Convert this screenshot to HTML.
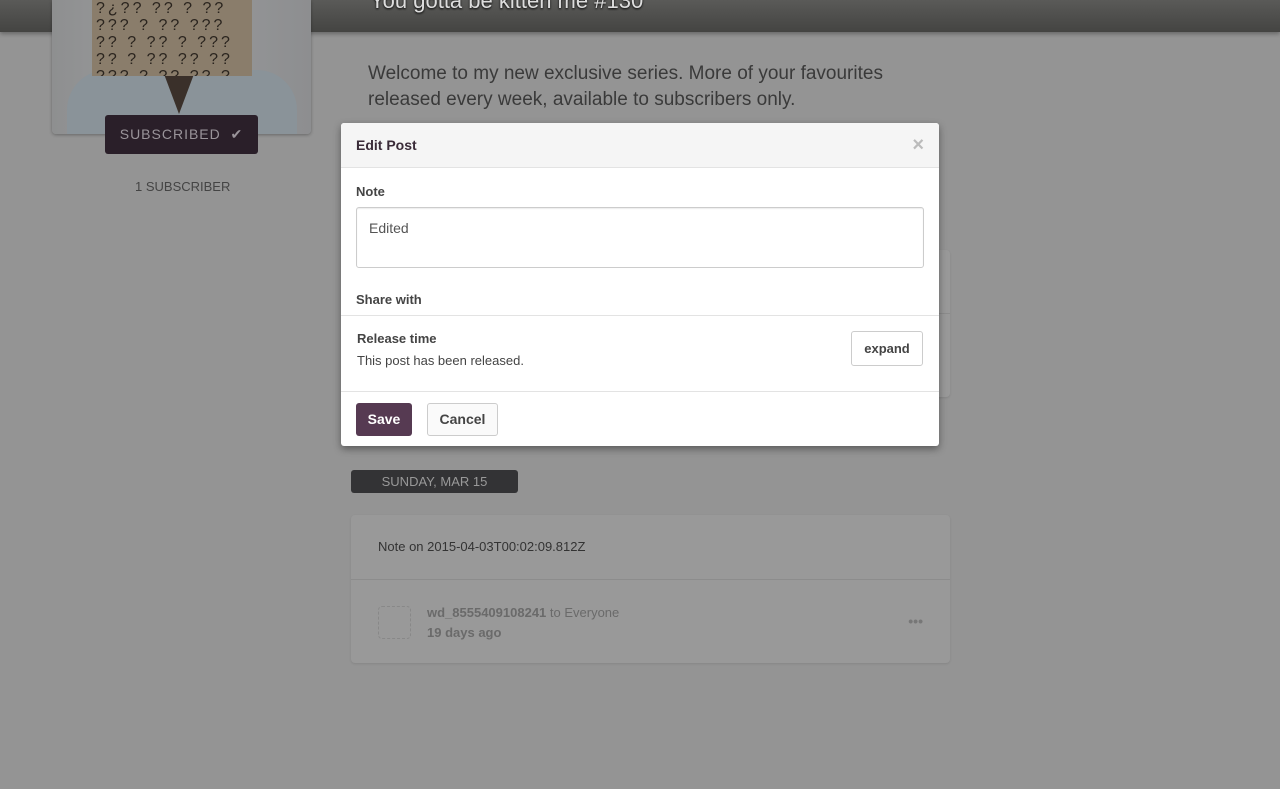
<!DOCTYPE html>
<html><head><style>
body{margin:0;width:1280px;height:789px;background:#949494;font-family:"Liberation Sans",sans-serif;position:relative;overflow:hidden}
.hdr{position:absolute;left:0;top:0;width:1280px;height:32px;background:linear-gradient(#5a5a58,#444442);box-shadow:0 2px 4px rgba(0,0,0,.3)}
.title{position:absolute;left:370px;top:-12px;font-size:22px;color:#ddd;text-shadow:0 1px 2px #000}
.pic{position:absolute;left:52px;top:0;width:259px;height:134px;border-radius:0 0 4px 4px;background:linear-gradient(90deg,#8e8f90,#9a9b9c 40%,#8d8e90);overflow:hidden;box-shadow:0 1px 3px rgba(0,0,0,.3)}
.bag{position:absolute;left:40px;top:0;width:160px;height:76px;background:#8a7d6b;color:#2a241e;font-size:16px;line-height:17px;overflow:hidden;letter-spacing:3px;padding-left:4px;box-sizing:border-box}
.shirt{position:absolute;left:15px;top:70px;width:230px;height:70px;background:#8a9399;border-radius:40px 40px 0 0}
.neck{position:absolute;left:112px;top:74px;width:30px;height:40px;background:#3a302a;clip-path:polygon(0 0,100% 0,50% 100%)}
.sub{position:absolute;left:105px;top:115px;width:153px;height:39px;background:#2a1f29;border-radius:3px;color:#9a949a;font-size:14px;letter-spacing:1px;line-height:39px;text-align:center}
.subs{position:absolute;left:135px;top:179px;color:#444;font-size:13px}
.welcome{position:absolute;left:368px;top:61px;width:540px;font-size:19px;line-height:26px;color:#3a3a3a}
.card{position:absolute;left:351px;width:599px;background:#999;border-radius:4px;box-shadow:0 1px 2px rgba(0,0,0,.1)}
.date{position:absolute;left:351px;top:470px;width:167px;height:23px;background:#333335;border-radius:3px;color:#999;font-size:13px;line-height:23px;text-align:center}
.modal{position:absolute;left:341px;top:123px;width:598px;height:323px;background:#fff;border-radius:3px;box-shadow:0 3px 8px rgba(0,0,0,.4);color:#444}
.mh{height:44px;background:#f5f5f5;border-bottom:1px solid #e3e3e3;border-radius:3px 3px 0 0}
b{font-weight:bold}
</style></head><body>
<div class="hdr"></div>
<div class="title">You gotta be kitten me #130</div>
<div class="pic"><div class="shirt"></div><div class="neck"></div><div class="bag">?¿?? ?? ? ?? ??? ? ?? ??? ?? ? ?? ? ??? ?? ? ?? ?? ?? ??? ? ?? ?? ?</div></div>
<div class="sub">SUBSCRIBED &nbsp;✔</div>
<div class="subs">1 SUBSCRIBER</div>
<div class="welcome">Welcome to my new exclusive series. More of your favourites released every week, available to subscribers only.</div>
<div class="card" style="top:250px;height:147px"><div style="position:absolute;top:63px;left:0;right:0;border-top:1px solid #8c8c8c"></div></div>
<div class="date">SUNDAY, MAR 15</div>
<div class="card" style="top:515px;height:148px">
<div style="position:absolute;left:27px;top:24px;font-size:13px;color:#333">Note on 2015-04-03T00:02:09.812Z</div>
<div style="position:absolute;top:64px;left:0;right:0;border-top:1px solid #8c8c8c"></div>
<div style="position:absolute;left:27px;top:91px;width:31px;height:31px;border:1px dashed #888;border-radius:4px"></div>
<div style="position:absolute;left:76px;top:88px;font-size:13px;color:#6a6a6a;line-height:20px"><b>wd_8555409108241</b> to Everyone<br><b>19 days ago</b></div>
<div style="position:absolute;right:27px;top:98px;color:#777;font-size:14px;font-weight:bold">•••</div>
</div>
<div class="modal">
<div class="mh"><div style="position:absolute;left:15px;top:14px;font-size:14px;font-weight:bold;color:#3a2b38">Edit Post</div><div style="position:absolute;right:15px;top:11px;color:#bbb;font-size:20px;font-weight:bold">×</div></div>
<div style="position:absolute;left:15px;top:61px;font-size:13px;font-weight:bold">Note</div>
<div style="position:absolute;left:15px;top:84px;width:566px;height:59px;border:1px solid #ccc;border-radius:3px;box-shadow:inset 0 1px 1px rgba(0,0,0,.08)"><div style="padding:12px;font-size:14px;color:#555">Edited</div></div>
<div style="position:absolute;left:15px;top:169px;font-size:13px;font-weight:bold">Share with</div>
<div style="position:absolute;left:0;right:0;top:192px;border-top:1px solid #e3e3e3"></div>
<div style="position:absolute;left:16px;top:208px;font-size:13px;font-weight:bold">Release time</div>
<div style="position:absolute;left:16px;top:230px;font-size:13px">This post has been released.</div>
<div style="position:absolute;left:510px;top:208px;width:70px;height:33px;border:1px solid #ccc;border-radius:3px;font-size:13px;font-weight:bold;line-height:33px;text-align:center">expand</div>
<div style="position:absolute;left:0;right:0;top:268px;border-top:1px solid #e3e3e3"></div>
<div style="position:absolute;left:15px;top:280px;width:56px;height:33px;background:#563a52;border-radius:3px;color:#fff;font-size:14px;font-weight:bold;line-height:33px;text-align:center">Save</div>
<div style="position:absolute;left:86px;top:280px;width:69px;height:31px;border:1px solid #ccc;border-radius:3px;background:#fafafa;font-size:14px;font-weight:bold;line-height:31px;text-align:center">Cancel</div>
</div>
</body></html>
